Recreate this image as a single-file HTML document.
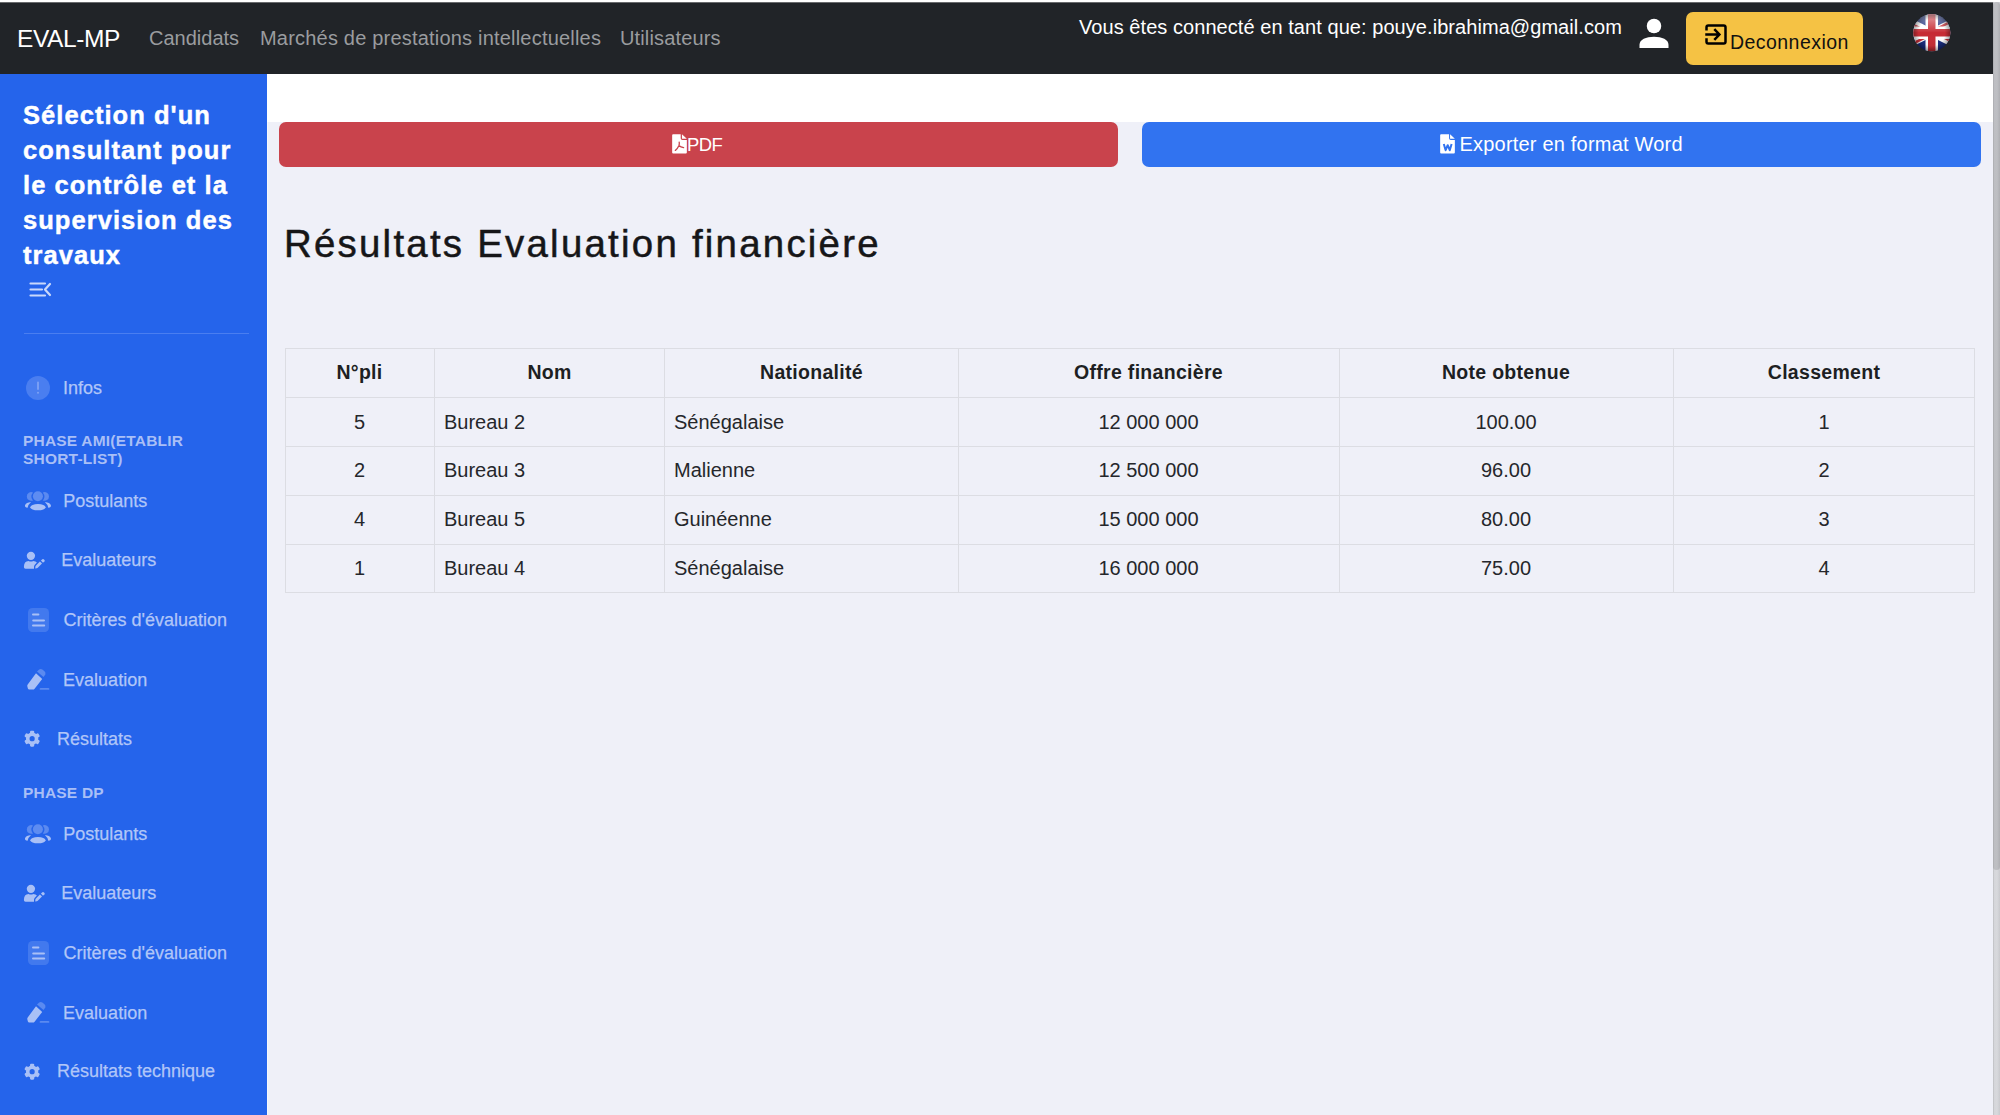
<!DOCTYPE html>
<html lang="fr">
<head>
<meta charset="utf-8">
<title>EVAL-MP</title>
<style>
*{box-sizing:border-box;margin:0;padding:0}
html,body{width:2000px;height:1115px;overflow:hidden;background:#eff0f8;font-family:"Liberation Sans",sans-serif}
.a{position:absolute}
.t{position:absolute;white-space:nowrap;line-height:1}
#topline{left:0;top:0;width:1993px;z-index:2;height:3px;background:linear-gradient(#fff 0,#fff 1.5px,#1e2024 3px)}
#nav{left:0;top:2px;width:1993px;height:72px;background:#212428}
#side{left:0;top:74px;width:267px;height:1041px;background:#2564eb}
#white{left:267px;top:74px;width:1726px;height:48px;background:#fff}
#scroll{left:1993px;top:0;width:7px;height:1115px;background:linear-gradient(90deg,#bcbdc1 0,#d5d6da 1.5px,#d8d9dd 4px,#c9cace 7px)}
#thumb{z-index:3;left:1993px;top:2px;width:7px;height:868px;background:linear-gradient(90deg,#a9aaae 0,#bdbec2 1.5px,#bebfc3 4px,#aeafb3 7px);border-radius:3.5px}
.nl{color:#9a9c9f;font-size:20px}
.si{color:#b1c6f8;font-size:18px;-webkit-text-stroke:.25px #b1c6f8}
.ph{color:#a9bff6;font-size:15.5px;font-weight:700;letter-spacing:.2px}
.btn{border-radius:7px}
#tbl{left:285px;top:348px;width:1690px;height:245px;border:1px solid #dcdde3}
.hl{position:absolute;left:0;width:100%;height:1px;background:#dcdde3}
.vl{position:absolute;top:0;height:100%;width:1px;background:#dcdde3}
.th{font-weight:700;font-size:19.5px;color:#1d1f23;letter-spacing:.3px}
.td{font-size:20px;color:#25272b}
</style>
</head>
<body>
<div id="topline" class="a"></div>
<div id="nav" class="a"></div>
<div id="side" class="a"></div>
<div id="white" class="a"></div>
<div class="a" style="left:267px;top:122px;width:1px;height:993px;background:#f6f7fc"></div>
<div id="scroll" class="a"></div>
<div class="a" style="left:1993px;top:0;width:7px;height:2px;background:#fff;z-index:2"></div>
<div id="thumb" class="a"></div>

<!-- NAVBAR -->
<div class="t" style="left:17px;top:27px;font-size:24.5px;color:#fff;letter-spacing:-.4px">EVAL-MP</div>
<div class="t nl" style="left:149px;top:28.3px">Candidats</div>
<div class="t nl" style="left:260px;top:28.3px;letter-spacing:.2px">Marchés de prestations intellectuelles</div>
<div class="t nl" style="left:620px;top:28.3px;letter-spacing:.14px">Utilisateurs</div>
<div class="t" style="left:1079px;top:16.6px;font-size:20px;color:#fff;letter-spacing:.06px">Vous êtes connecté en tant que: pouye.ibrahima@gmail.com</div>
<!-- person icon -->
<svg class="a" style="left:1639px;top:18px" width="30" height="30" viewBox="0 0 30 30">
  <circle cx="15" cy="8" r="7.25" fill="#fff"/>
  <path d="M0.5 30 V26.8 C0.5 21.6 7 18.75 15 18.75 C23 18.75 29.5 21.6 29.5 26.8 V30 Z" fill="#fff"/>
</svg>
<!-- deconnexion -->
<div class="a btn" style="left:1686px;top:12px;width:177px;height:53px;background:#f5c244;border-radius:7px"></div>
<svg class="a" style="left:1704px;top:23px" width="24" height="23" viewBox="0 0 24 23">
  <path d="M2.5 7.5 V4.3 Q2.5 2.5 4.3 2.5 H19.7 Q21.5 2.5 21.5 4.3 V18.7 Q21.5 20.5 19.7 20.5 H4.3 Q2.5 20.5 2.5 18.7 V15.25" fill="none" stroke="#000" stroke-width="2.5"/>
  <path d="M1.25 11.5 H14.5 M10.3 6.2 L15.4 11.5 L10.3 16.8" fill="none" stroke="#000" stroke-width="2.5"/>
</svg>
<div class="t" style="left:1730px;top:32.5px;font-size:19.5px;color:#111;letter-spacing:.45px">Deconnexion</div>
<!-- flag -->
<svg class="a" style="left:1913px;top:14px" width="37.5" height="37.5" viewBox="0 0 37 37">
  <defs>
    <clipPath id="fc"><circle cx="18.5" cy="18.5" r="18.3"/></clipPath>
    <clipPath id="ft"><path d="M30,15 h30 v15 z v15 h-30 z h-30 v-15 z v-15 h30 z"/></clipPath>
    <linearGradient id="fgl" x1="0" y1="0" x2="0" y2="1">
      <stop offset="0" stop-color="#fff" stop-opacity=".55"/>
      <stop offset=".45" stop-color="#fff" stop-opacity=".08"/>
      <stop offset=".5" stop-color="#fff" stop-opacity="0"/>
      <stop offset="1" stop-color="#000" stop-opacity=".1"/>
    </linearGradient>
    <radialGradient id="fgr" cx="50%" cy="50%" r="50%">
      <stop offset=".7" stop-color="#000" stop-opacity="0"/>
      <stop offset="1" stop-color="#000" stop-opacity=".35"/>
    </radialGradient>
  </defs>
  <g clip-path="url(#fc)">
    <g transform="translate(-18.5 0) scale(1.23333)">
      <rect width="60" height="30" fill="#14287a"/>
      <path d="M0,0 L60,30 M60,0 L0,30" stroke="#fff" stroke-width="6"/>
      <path d="M0,0 L60,30 M60,0 L0,30" clip-path="url(#ft)" stroke="#c62a33" stroke-width="4"/>
      <path d="M30,0 v30 M0,15 h60" stroke="#fff" stroke-width="10"/>
      <path d="M30,0 v30 M0,15 h60" stroke="#c62a33" stroke-width="6"/>
    </g>
    <rect width="37" height="37" fill="url(#fgl)"/>
    <rect width="37" height="37" fill="url(#fgr)"/>
  </g>
</svg>

<!-- SIDEBAR -->
<div class="t" style="left:23px;top:98.4px;font-size:25.5px;font-weight:700;color:#fff;letter-spacing:1.05px;-webkit-text-stroke:.45px #fff;line-height:34.8px;white-space:normal;width:240px">Sélection d'un<br>consultant pour<br>le contrôle et la<br>supervision des<br>travaux</div>
<svg class="a" style="left:29px;top:282px" width="23" height="16" viewBox="0 0 23 16">
  <path d="M1.5 1.5 H16 M1.5 7.5 H13 M1.5 13.5 H16" stroke="#c9d8fb" stroke-width="2.2" stroke-linecap="round"/>
  <path d="M21 2 L16 7.5 L21 13" fill="none" stroke="#c9d8fb" stroke-width="2.2" stroke-linecap="round" stroke-linejoin="round"/>
</svg>
<div class="a" style="left:24px;top:333px;width:225px;height:1px;background:#4a7ef0"></div>

<!-- Infos -->
<svg class="a" style="left:26px;top:376px" width="24" height="24" viewBox="0 0 24 24">
  <circle cx="12" cy="12" r="12" fill="#4a7ef0"/>
  <path d="M12 6.5 V13" stroke="#7fa2f4" stroke-width="1.8" stroke-linecap="round"/>
  <circle cx="12" cy="16.8" r="1" fill="#7fa2f4"/>
</svg>
<div class="t si" style="left:63px;top:379px">Infos</div>

<div class="t ph" style="left:23px;top:432.4px;line-height:18px;white-space:normal;width:240px">PHASE AMI(ETABLIR<br>SHORT-LIST)</div>

<!-- group 1 -->

<svg width="0" height="0" style="position:absolute">
 <defs>
  <symbol id="i-users" viewBox="0 0 36 28">
    <path d="M13.03 6.4 A4.4 4.4 0 1 0 13.03 14.4 A6.3 6.3 0 0 1 13.03 6.4 Z" fill="#5b8af0"/>
    <path d="M22.77 6.4 A4.4 4.4 0 1 1 22.77 14.4 A6.3 6.3 0 0 0 22.77 6.4 Z" fill="#5b8af0"/>
    <circle cx="17.9" cy="10.3" r="5" fill="#5e8cf1"/>
    <ellipse cx="17.95" cy="21.15" rx="7.6" ry="3.2" fill="#a9c0f6"/>
    <path d="M11.05 16.1 Q6 16.6 5 19.2 Q4.6 21.4 7.6 21.8 Q8.2 18.5 11.05 16.1 Z" fill="#a9c0f6"/>
    <path d="M24.85 16.1 Q29.9 16.6 30.9 19.2 Q31.3 21.4 28.3 21.8 Q27.7 18.5 24.85 16.1 Z" fill="#a9c0f6"/>
  </symbol>
  <symbol id="i-upen" viewBox="0 0 30 24">
    <circle cx="10.92" cy="7.85" r="4.15" fill="#a9c0f6"/>
    <path d="M3.9 18.9 Q3.9 12.9 8.6 12.9 Q10.9 13.9 13.2 12.9 Q15.8 12.9 16.9 14.4 L14.6 16.9 Q14 17.8 14 18.8 L14 20.66 H5.5 Q3.9 20.66 3.9 18.9 Z" fill="#a9c0f6"/>
    <path d="M15.2 20.5 L15.4 18.6 Q15.5 17.9 16 17.4 L19.9 13.6 L22 15.6 L18 19.6 Q17.5 20.1 16.8 20.3 Z" fill="#a9c0f6"/>
    <path d="M20.9 12.6 L22.4 11.2 Q23 10.7 23.6 11.2 L24.5 12.1 Q25 12.7 24.5 13.3 L23 14.7 Z" fill="#a9c0f6"/>
  </symbol>
  <symbol id="i-list" viewBox="0 0 21 24.1">
    <rect x="0" y="0" width="21" height="24.1" rx="4.5" fill="#4279ee"/>
    <path d="M5 6.5 H10.4 M5.2 12.6 H16 M5 17.6 H16.2" stroke="#a9c0f6" stroke-width="2" stroke-linecap="round"/>
  </symbol>
  <symbol id="i-pencil" viewBox="0 0 32 30">
    <path d="M14 9.3 L20.2 14.9 L12.6 24.7 Q11.9 25.6 10.8 25.6 L7.2 25.6 Q6.2 25.6 5.9 24.6 L5.3 22.3 Q5.1 21.3 5.7 20.5 Z" fill="#a9c0f6"/>
    <path d="M15 7.6 L17.2 5.5 Q18.7 4.4 20.3 5.5 L22.5 7.3 Q24 8.6 23.3 10.4 L21.5 12.9 Z" fill="#5b8af0"/>
    <path d="M18.6 24.9 H26.4" stroke="#5b8af0" stroke-width="1.9" stroke-linecap="round"/>
  </symbol>
  <symbol id="i-gear" viewBox="0 0 26 26">
    <g transform="translate(12.13 12.7)" fill="#a9c0f6">
      <circle r="6.2"/>
      <rect x="-2.1" y="-7.95" width="4.2" height="15.9" rx="1.1"/>
      <rect x="-2.1" y="-7.95" width="4.2" height="15.9" rx="1.1" transform="rotate(60)"/>
      <rect x="-2.1" y="-7.95" width="4.2" height="15.9" rx="1.1" transform="rotate(120)"/>
      <circle r="2.6" fill="#2564eb"/>
    </g>
  </symbol>
 </defs>
</svg>
<svg class="a" style="left:20px;top:486.0px" width="36" height="28"><use href="#i-users"/></svg>
<div class="t si" style="left:63.3px;top:491.8px">Postulants</div>
<svg class="a" style="left:20px;top:548.0px" width="30" height="24"><use href="#i-upen"/></svg>
<div class="t si" style="left:61.3px;top:551.4px">Evaluateurs</div>
<svg class="a" style="left:27.5px;top:608.0px" width="21" height="24.1"><use href="#i-list"/></svg>
<div class="t si" style="left:63.6px;top:610.9px">Critères d'évaluation</div>
<svg class="a" style="left:22px;top:664.0px" width="32" height="30"><use href="#i-pencil"/></svg>
<div class="t si" style="left:63.1px;top:670.5px">Evaluation</div>
<svg class="a" style="left:20px;top:726.0px" width="26" height="26"><use href="#i-gear"/></svg>
<div class="t si" style="left:56.9px;top:729.9px">Résultats</div>
<div class="t ph" style="left:23px;top:785px">PHASE DP</div>
<svg class="a" style="left:20px;top:819.0px" width="36" height="28"><use href="#i-users"/></svg>
<div class="t si" style="left:63.3px;top:824.8px">Postulants</div>
<svg class="a" style="left:20px;top:881.0px" width="30" height="24"><use href="#i-upen"/></svg>
<div class="t si" style="left:61.3px;top:884.4px">Evaluateurs</div>
<svg class="a" style="left:27.5px;top:941.0px" width="21" height="24.1"><use href="#i-list"/></svg>
<div class="t si" style="left:63.6px;top:943.9px">Critères d'évaluation</div>
<svg class="a" style="left:22px;top:997.0px" width="32" height="30"><use href="#i-pencil"/></svg>
<div class="t si" style="left:63.1px;top:1003.5px">Evaluation</div>
<svg class="a" style="left:20px;top:1059.0px" width="26" height="26"><use href="#i-gear"/></svg>
<div class="t si" style="left:56.9px;top:1062.3px">Résultats technique</div>

<!-- MAIN -->
<div class="a btn" style="left:279px;top:122px;width:839px;height:45px;background:#c9434c"></div>
<svg class="a" style="left:672px;top:134px" width="15" height="20" viewBox="0 0 15 20">
  <path d="M1.1 0.15 H8.7 V4.3 Q8.7 6.05 10.45 6.05 H14.84 V18.5 Q14.84 19.5 13.84 19.5 H1.16 Q0.16 19.5 0.16 18.5 V1.15 Q0.16 0.15 1.1 0.15 Z" fill="#fff"/>
  <path d="M9.94 0.15 L14.84 4.8 H9.94 Z" fill="#fff"/>
  <path d="M3.3 16.4 Q5.6 14.6 7 11.5 Q7.5 9.8 7.2 8.2 M7.2 11.8 Q8.6 13.2 11.6 13.7" fill="none" stroke="#c9434c" stroke-width="1.3" stroke-linecap="round"/>
</svg>
<div class="t" style="left:687px;top:136.3px;font-size:18.5px;color:#fff;letter-spacing:-.6px">PDF</div>

<div class="a btn" style="left:1142px;top:122px;width:839px;height:45px;background:#3173f0"></div>
<svg class="a" style="left:1440px;top:134px" width="15" height="20" viewBox="0 0 15 20">
  <path d="M1.1 0.15 H9.07 V4.3 Q9.07 6.05 10.8 6.05 H14.85 V18.5 Q14.85 19.5 13.85 19.5 H1.16 Q0.16 19.5 0.16 18.5 V1.15 Q0.16 0.15 1.1 0.15 Z" fill="#fff"/>
  <path d="M10.08 0.15 L14.85 4.8 H10.08 Z" fill="#fff"/>
  <path d="M3.8 10 L5.65 16.2 L7.7 11.2 L9.75 16.2 L11.6 10" fill="none" stroke="#3173f0" stroke-width="2" stroke-linejoin="round"/>
</svg>
<div class="t" style="left:1459.5px;top:133.7px;font-size:20px;color:#fff;letter-spacing:.2px">Exporter en format Word</div>

<div class="t" style="left:284px;top:225.4px;font-size:38.4px;color:#161618;letter-spacing:2.25px;-webkit-text-stroke:.5px #161618">Résultats Evaluation financière</div>

<div id="tbl" class="a">
  <div class="hl" style="top:48px"></div>
  <div class="hl" style="top:97px"></div>
  <div class="hl" style="top:146px"></div>
  <div class="hl" style="top:195px"></div>
  <div class="vl" style="left:148px"></div>
  <div class="vl" style="left:378px"></div>
  <div class="vl" style="left:672px"></div>
  <div class="vl" style="left:1053px"></div>
  <div class="vl" style="left:1387px"></div>
</div>
<div class="t th" style="left:285px;width:149px;text-align:center;top:362.79px">N°pli</div>
<div class="t th" style="left:434px;width:231px;text-align:center;top:362.79px">Nom</div>
<div class="t th" style="left:665px;width:293px;text-align:center;top:362.79px">Nationalité</div>
<div class="t th" style="left:958px;width:381px;text-align:center;top:362.79px">Offre financière</div>
<div class="t th" style="left:1339px;width:334px;text-align:center;top:362.79px">Note obtenue</div>
<div class="t th" style="left:1673px;width:302px;text-align:center;top:362.79px">Classement</div>
<div class="t td" style="left:285px;width:149px;text-align:center;top:411.67px">5</div>
<div class="t td" style="left:444px;top:411.67px">Bureau 2</div>
<div class="t td" style="left:674px;top:411.67px">Sénégalaise</div>
<div class="t td" style="left:958px;width:381px;text-align:center;top:411.67px">12 000 000</div>
<div class="t td" style="left:1339px;width:334px;text-align:center;top:411.67px">100.00</div>
<div class="t td" style="left:1673px;width:302px;text-align:center;top:411.67px">1</div>
<div class="t td" style="left:285px;width:149px;text-align:center;top:460.47px">2</div>
<div class="t td" style="left:444px;top:460.47px">Bureau 3</div>
<div class="t td" style="left:674px;top:460.47px">Malienne</div>
<div class="t td" style="left:958px;width:381px;text-align:center;top:460.47px">12 500 000</div>
<div class="t td" style="left:1339px;width:334px;text-align:center;top:460.47px">96.00</div>
<div class="t td" style="left:1673px;width:302px;text-align:center;top:460.47px">2</div>
<div class="t td" style="left:285px;width:149px;text-align:center;top:509.27px">4</div>
<div class="t td" style="left:444px;top:509.27px">Bureau 5</div>
<div class="t td" style="left:674px;top:509.27px">Guinéenne</div>
<div class="t td" style="left:958px;width:381px;text-align:center;top:509.27px">15 000 000</div>
<div class="t td" style="left:1339px;width:334px;text-align:center;top:509.27px">80.00</div>
<div class="t td" style="left:1673px;width:302px;text-align:center;top:509.27px">3</div>
<div class="t td" style="left:285px;width:149px;text-align:center;top:558.07px">1</div>
<div class="t td" style="left:444px;top:558.07px">Bureau 4</div>
<div class="t td" style="left:674px;top:558.07px">Sénégalaise</div>
<div class="t td" style="left:958px;width:381px;text-align:center;top:558.07px">16 000 000</div>
<div class="t td" style="left:1339px;width:334px;text-align:center;top:558.07px">75.00</div>
<div class="t td" style="left:1673px;width:302px;text-align:center;top:558.07px">4</div>

</body>
</html>
